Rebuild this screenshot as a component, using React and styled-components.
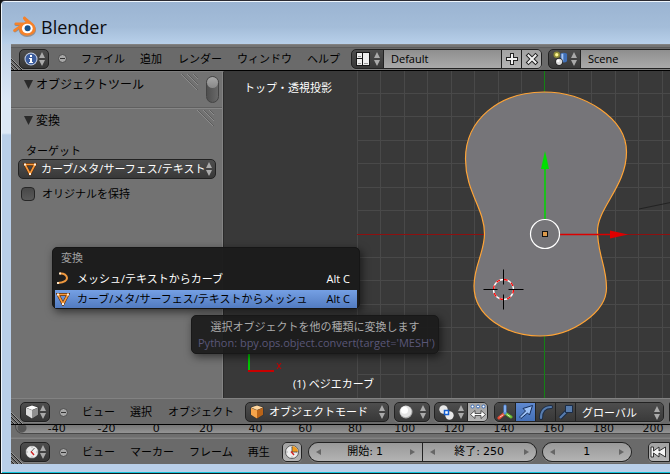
import React from 'react';
import styled, { createGlobalStyle } from 'styled-components';

const GlobalStyle = createGlobalStyle`
  * { box-sizing: border-box; }
  body { margin: 0; background: #111; }
  body, button, input, select {
    font-family: "Open Sans", "Noto Sans CJK JP", sans-serif;
    font-size: 11px;
    line-height: 16px;
  }
  button, input, select { color: inherit; margin: 0; padding: 0; border: 0; background: none; }
  svg { display: block; flex: none; }
`;

const Window = styled.div`
  position: relative;
  display: flex;
  flex-direction: column;
  min-height: 100vh;
  overflow: hidden;
  border-top: 1px solid #2b2a31;
  border-left: 1px solid #111;
  border-bottom: 1px solid #181818;
  background: linear-gradient(#a4bdd9, #dce8f6 100px, #dce8f6 132px, #b9cfe9 134px);
  box-shadow: inset 1px 1px 0 #eef5fc, inset 0 -1px 0 #12c4dc;
  padding: 1px 0 9px 10px;
  border-top-left-radius: 5px;
`;

const TitleBar = styled.header`
  display: flex;
  align-items: center;
  gap: 4px;
  height: 42px;
  margin-left: -9px;
  padding: 8px 0 0 11px;
  background: linear-gradient(#9bb4d2, #a4bdd9 60%, #b8d0ea);
`;

const Title = styled.h1`
  margin: 0;
  font: 400 18px/24px "Open Sans", sans-serif;
  color: #0c0c10;
`;

const Frame = styled.main`
  display: flex;
  flex-direction: column;
  flex: 1;
  min-width: 0;
  background: #727272;
`;

const Toolbar = styled.nav`
  position: relative;
  display: flex;
  align-items: center;
  height: 26px;
  flex: none;
  padding-left: ${p => p.$indent || 9}px;
  padding-top: 1px;
  overflow: hidden;
  white-space: nowrap;
  background: #6a6a6a;
  border-top: 1px solid #828282;
  color: #000;
`;

const InfoBar = styled(Toolbar)`
  height: 27px;
  padding-top: 2px;
  border-bottom: 1px solid #000;
  box-shadow: inset 0 2px 0 #747474, inset 0 3px 0 #5c5c5c;
`;

const Corner = styled.svg`
  position: absolute;
  left: 0;
  bottom: 0;
`;

const EditorButton = styled.button`
  display: flex;
  align-items: center;
  justify-content: space-between;
  flex: none;
  width: 30px;
  height: 20px;
  padding: 0 3px 0 4px;
  border: 1px solid #222;
  border-radius: 5px;
  background: linear-gradient(#4e4e4e, #363636);
  box-shadow: 0 1px 0 #808080;
`;

const Collapse = styled.button`
  width: 9px;
  height: 9px;
  flex: none;
  margin: 0 14px 0 9px;
  border: 1px solid #4c4c4c;
  border-radius: 50%;
  background: linear-gradient(#333, #333) center / 5px 1px no-repeat, #a8a8a8;
`;

const Menus = styled.div`
  display: flex;
  gap: 15px;
  margin-right: ${p => p.$after}px;
`;

const MenuButton = styled.button`
  min-width: 23px;
  text-align: left;
`;

const Group = styled.div`
  display: flex;
  flex: ${p => (p.$grow ? '1 0 auto' : 'none')};
  width: ${p => (p.$w ? `${p.$w}px` : 'auto')};
  height: 20px;
  margin-right: ${p => p.$after || 0}px;
  overflow: hidden;
  border: 1px solid #222;
  border-radius: ${p => p.$radius || '5px'};
  background: linear-gradient(#4e4e4e, #383838);
  box-shadow: 0 1px 0 #808080;
`;

const DropCell = styled.button`
  display: flex;
  align-items: center;
  justify-content: space-between;
  width: ${p => p.$w}px;
  padding: 0 3px 0 4px;
`;

const NameInput = styled.input`
  flex: 1;
  width: 100px;
  min-width: 0;
  padding-left: 7px;
  border-left: 1px solid #222;
  background: linear-gradient(#8f8f8f, #aaaaaa);
  outline: 0;
`;

const ToggleCell = styled.button`
  display: grid;
  place-items: center;
  width: 20px;
  border-left: ${p => (p.$first ? 0 : '1px solid #222')};
  background: ${p =>
    p.$tone === 'blue' ? 'linear-gradient(#5f88cf, #4470b8)'
      : p.$tone === 'light' ? 'linear-gradient(#a2a2a2, #b4b4b4)'
        : 'linear-gradient(#4a4a4a, #383838)'};
`;

const SelectBox = styled.label`
  display: flex;
  align-items: center;
  width: ${p => (p.$w ? `${p.$w}px` : 'auto')};
  flex: none;
  height: 20px;
  margin-right: ${p => p.$after || 0}px;
  padding: 0 3px 0 4px;
  border: ${p => (p.$flat ? '0' : '1px solid #222')};
  border-left: 1px solid #222;
  border-radius: ${p => (p.$flat ? '0' : '5px')};
  background: linear-gradient(#4e4e4e, #383838);
  color: #fff;
  select {
    flex: 1;
    min-width: 0;
    margin-left: ${p => p.$pad || 5}px;
    appearance: none;
    overflow: hidden;
    outline: 0;
  }
`;

const Work = styled.div`
  display: flex;
  flex: 1;
  min-height: 326px;
`;

const ToolShelf = styled.aside`
  position: relative;
  width: 213px;
  flex: none;
  background: #727272;
  border-top: 1px solid #7e7e7e;
  border-right: 1px solid #2b2b2b;
  box-shadow: inset -1px 0 0 #848484;
`;

const PanelHead = styled.button`
  display: flex;
  align-items: center;
  gap: 3px;
  width: 211px;
  height: ${p => p.$h}px;
  padding: 0 0 ${p => p.$bottom || 0}px 13px;
  font-size: 12px;
  color: #000;
  border-top: ${p => (p.$line ? '1px solid #868686' : 0)};
  box-shadow: ${p => (p.$line ? '0 -1px 0 #606060' : 'none')};
`;

const PanelBody = styled.div`
  display: flex;
  flex-direction: column;
  padding: 8px 7px 0;
`;

const FieldLabel = styled.label`
  padding-left: 8px;
  line-height: 17px;
  color: #000;
`;

const CheckRow = styled.label`
  display: flex;
  align-items: center;
  gap: 7px;
  margin: 7px 3px;
  color: #000;
  input {
    appearance: none;
    width: 14px;
    height: 14px;
    border: 1px solid #262626;
    border-radius: 4px;
    background: linear-gradient(#484848, #5a5a5a);
  }
`;

const Scroll = styled.div`
  position: absolute;
  top: 4px;
  right: 4px;
  width: 13px;
  height: 27px;
  border: 1px solid #444;
  border-radius: 7px;
  background: linear-gradient(90deg, #4f4f4f, #686868);
  &::before {
    content: "";
    display: block;
    width: 11px;
    height: 11px;
    border-radius: 50%;
    background: linear-gradient(#a8a8a8, #888);
  }
`;

const Grip = styled.svg`
  position: absolute;
  top: ${p => p.$top}px;
  right: ${p => p.$right}px;
`;

const Viewport = styled.section`
  position: relative;
  flex: 1;
  min-width: 0;
  overflow: hidden;
  background: #393939;
  color: #fff;
`;

const Scene = styled.svg`
  position: absolute;
  inset: 0;
  width: 100%;
  height: 100%;
`;

const ViewLabel = styled.span`
  position: absolute;
  left: ${p => p.$left}px;
  ${p => (p.$bottom ? 'bottom: 6px;' : 'top: 9px;')}
`;

const Ruler = styled.div`
  height: 14px;
  flex: none;
  border-top: 1px solid #000;
  border-bottom: 1px solid #777;
  background: #6e6e6e;
`;

const RulerTrack = styled.div`
  display: flex;
  height: 9px;
  margin-left: 4px;
  margin-right: -9px;
  padding-left: 16px;
  border: 1px solid #484848;
  border-top: 0;
  border-bottom-left-radius: 8px;
  background: radial-gradient(circle at 6px 3px, #555 4px, transparent 5px), linear-gradient(#777, #949494);
`;

const Tick = styled.span`
  flex: 1 1 0;
  text-align: center;
  font: 11px/7px "DejaVu Sans", sans-serif;
  color: #0a0a0a;
`;

const NumberBox = styled.div`
  display: flex;
  align-items: center;
  flex: 1;
  padding: 0 7px;
  border-left: ${p => (p.$line ? '1px solid #222' : 0)};
  background: linear-gradient(#999, #b3b3b3);
  font-family: "DejaVu Sans", "Noto Sans CJK JP", sans-serif;
  label { flex: 1; display: flex; justify-content: center; gap: 3px; }
  input { width: ${p => p.$digits * 7}px; font-family: inherit; outline: 0; }
`;

const PopMenu = styled.div`
  position: absolute;
  left: 51px;
  top: 246px;
  display: flex;
  flex-direction: column;
  gap: 2px;
  width: 308px;
  padding: 2px 2px 0;
  border: 1px solid #161616;
  border-radius: 5px;
  background: rgba(28, 28, 28, 0.98);
  box-shadow: 2px 3px 8px rgba(0, 0, 0, 0.55);
  color: #fff;
`;

const PopTitle = styled.div`
  height: 18px;
  padding: 0 6px;
  color: #a0a0a0;
`;

const PopItem = styled.button`
  display: flex;
  align-items: center;
  height: 18px;
  padding: 0 7px 0 1px;
  color: ${p => (p.$active ? '#000' : '#fff')};
  background: ${p => (p.$active ? 'linear-gradient(#75a0e4, #527bc0)' : 'none')};
  span { flex: 1; margin-left: 7px; text-align: left; }
  kbd { font: inherit; }
`;

const Tip = styled.div`
  position: absolute;
  left: 190px;
  top: 314px;
  width: 248px;
  padding: 3px 6px 2px;
  border: 1px solid #181818;
  border-radius: 5px;
  background: rgba(27, 27, 27, 0.93);
  box-shadow: 2px 3px 8px rgba(0, 0, 0, 0.55);
  color: #aaa;
  text-align: center;
  white-space: nowrap;
  code { display: block; font: 11px/16px "Open Sans", sans-serif; color: #5a5778; text-align: left; }
`;

const Arrows = () => (
  <svg width="6" height="14" viewBox="0 0 6 14" fill="#aaa" aria-hidden="true">
    <path d="M3 0 6 6H0zM3 14 0 8h6z" />
  </svg>
);

const Lines = () => (
  <Corner width="12" height="12" viewBox="0 0 12 12" fill="none" aria-hidden="true">
    <path d="M0 1 11 12M0 5 7 12M0 9 3 12" stroke="#222" />
    <path d="M0 0 12 12M0 4 8 12M0 8 4 12" stroke="#a0a0a0" strokeWidth=".8" />
  </Corner>
);

const PanelGrip = ({ top, right }) => (
  <Grip $top={top} $right={right} width="17" height="17" viewBox="0 0 17 17" fill="none" strokeWidth=".7" aria-hidden="true">
    <path d="M0 0 16 16M6 0 17 11M12 0l5 5" stroke="#999" />
    <path d="M1 0 17 16M7 0 17 10M13 0l4 4" stroke="#555" />
  </Grip>
);

const Triangle = () => (
  <svg width="9" height="11" viewBox="0 0 9 11"><path d="M0 0h9L4.500 9z" fill="#2a2a2a" /></svg>
);

const BlenderLogo = () => (
  <svg width="24" height="22" viewBox="0 0 24 22" aria-hidden="true">
    <path d="M11 1.500c1-1 2 0 3 1l6 5c2 2 3 4 3 6 0 4-4 7-9 7-4 0-8-3-8-7l-3 2c-1 1-3 0-2-2l6-4H3c-2 0-2-3 0-3h8l2-1-2-2z" fill="#7a5a40" opacity=".5" transform="translate(0 .5)" />
    <path d="M10.500 1c1-1 2 0 3 1l6 5c2 1.500 3 3.500 3 6 0 4-4 6.500-8.500 6.500S6 17 6 12.500l-3.500 3c-1.500 1-3-.5-2-2L7 9H3c-2 0-2-2.500 0-2.500h8l2-.5-2.500-2.500c-1-1-.5-2 0-2.500z" fill="#f5822a" />
    <ellipse cx="14.300" cy="12.500" rx="5.400" ry="4.800" fill="#fff" />
    <circle cx="14.600" cy="12.300" r="3" fill="#15528c" />
  </svg>
);

const InfoIcon = () => (
  <svg width="14" height="14" viewBox="0 0 14 14">
    <circle cx="7" cy="7" r="6.500" fill="#c8d2e6" /><circle cx="7" cy="7" r="5.500" fill="#3b5c9c" />
    <path d="M5 6h3v4h1v1H5v-1h1V7H5zM6 3h2v2H6z" fill="#fff" />
  </svg>
);

const LayoutIcon = () => (
  <svg width="14" height="14" viewBox="0 0 14 14">
    <path d="M0 0h14v14H0z" fill="#181818" />
    <path d="M1 1h5v5H1zM1 7h5v6H1zM7 1h6v12H7z" fill="#eee" /><path d="M2 11h3v1H2zM8 11h4v1H8zM2 4h3v1H2z" fill="#999" />
  </svg>
);

const SceneIcon = () => (
  <svg width="15" height="15" viewBox="0 0 16 16">
    <circle cx="4" cy="4" r="3.500" fill="#8d8b38" /><circle cx="4" cy="4" r="1.800" fill="#fff68e" />
    <path d="M8 3q3-2.500 7 0v8q-3 2.500-7 0z" fill="#3f6fb7" /><path d="M9 3h2v8H9z" fill="#a8c7f2" />
    <circle cx="6.500" cy="11.500" r="4" fill="#222" /><circle cx="6.500" cy="11.500" r="3.300" fill="#ddd" /><circle cx="5.500" cy="10.500" r="1.500" fill="#fff" />
  </svg>
);

const SymbolIcon = ({ d }) => (
  <svg width="14" height="14" viewBox="0 0 14 14" fill="none" strokeLinecap="square">
    <path d={d} stroke="#222" strokeWidth="4" />
    <path d={d} stroke="#f2f2f2" strokeWidth="2" />
  </svg>
);

const MeshIcon = () => (
  <svg width="14" height="14" viewBox="0 0 14 14">
    <path d="M2 2.500h10L7 12z" fill="none" stroke="#5b2b08" strokeWidth="2.800" />
    <path d="M2 2.500h10L7 12z" fill="none" stroke="#f89a3c" strokeWidth="1.700" />
    <path d="M1 1.500h2v2H1zM11 1.500h2v2h-2zM6 11h2v2H6z" fill="#fff1df" />
  </svg>
);

const CurveIcon = () => (
  <svg width="14" height="14" viewBox="0 0 14 14">
    <path d="M4 1.500c4-.5 7 2 7 4.500S7 10.500 2 11" fill="none" stroke="#ef983f" strokeWidth="2" />
    <path d="M3 .5h2v2H3zM1 10h2v2H1z" fill="#ffe4c2" />
  </svg>
);

const CubeIcon = ({ top = '#fff', left = '#ddd', right = '#8f8f8f' }) => (
  <svg width="14" height="14" viewBox="0 0 14 14">
    <path d="M7 0 13.500 2v8L7 14 .5 10V2z" fill="#333" />
    <path d="M7 .5 13 2.500 7 5 1 2.500z" fill={top} />
    <path d="M1 2.800 7 5.300v8.200L1 9.800z" fill={left} />
    <path d="M13 2.800 7 5.300v8.200l6-3.700z" fill={right} />
  </svg>
);

const ClockIcon = ({ wedge }) => (
  <svg width="14" height="14" viewBox="0 0 14 14" fill="none">
    <circle cx="7" cy="7" r="6.500" fill="#eee" stroke="#444" strokeWidth=".8" />
    {wedge && <path d="M7 7V1a6 6 0 0 1 6 6z" fill="#f09a1b" />}
    <path d="M7 1.500v1M7 11.500v1M1.500 7h1M11.500 7h1" stroke="#777" />
    <path d={wedge ? 'M7 7V2M7 7h5' : 'M6 7l3.500-4'} stroke="#444" strokeWidth=".8" />
    <path d="M6 6.500 9 10" stroke="#d12020" strokeWidth="1.400" />
  </svg>
);

const SphereIcon = () => (
  <svg width="14" height="14" viewBox="0 0 14 14">
    <circle cx="7" cy="7" r="6.500" fill="#aaa" /><circle cx="6.700" cy="6.500" r="5.800" fill="#e4e4e4" /><circle cx="5.500" cy="5.200" r="3.500" fill="#fff" />
  </svg>
);

const PivotIcon = () => (
  <svg width="15" height="15" viewBox="0 0 15 15">
    <circle cx="4.500" cy="4.500" r="4.200" fill="#e8e8e8" /><circle cx="10.500" cy="10.500" r="4.200" fill="#e8e8e8" />
    <path d="M5.500 5.500h4v4h-4z" fill="#fff" stroke="#155fd0" strokeWidth="1.500" />
  </svg>
);

const CentersIcon = () => (
  <svg width="16" height="16" viewBox="0 0 16 16" fill="none">
    <g fill="#fff" stroke="#3569b8"><circle cx="2.500" cy="2.500" r="1.500" /><circle cx="8" cy="2.500" r="1.500" /><circle cx="13.500" cy="2.500" r="1.500" /></g>
    <path d="M.5 10.500 5 6.500v3h6v-3l4.500 4L11 14.500v-3H5v3z" fill="#fff" stroke="#333" strokeWidth=".8" />
  </svg>
);

const AxesIcon = () => (
  <svg width="16" height="16" viewBox="0 0 16 16" strokeWidth="3" strokeLinecap="round">
    <path d="M8 9 2 14" stroke="#e24b34" /><path d="m8 9 6 4" stroke="#65b832" /><path d="M8 2v7" stroke="#4c86df" />
    <path d="M8 2v6" stroke="#b9d5ff" strokeWidth="1" /><path d="M3 13 6 11" stroke="#ffd0c4" strokeWidth="1" /><path d="m10 10.500 3 2" stroke="#d4f5b4" strokeWidth="1" />
  </svg>
);

const ArrowIcon = () => (
  <svg width="16" height="16" viewBox="0 0 16 16">
    <path d="M1.500 13 7.500 7 5 4.500 14.500 1.500 11.500 11 9.500 9 3 14.500z" fill="#9cc0f5" stroke="#142c59" strokeLinejoin="round" />
  </svg>
);

const ArcIcon = () => (
  <svg width="16" height="16" viewBox="0 0 16 16" fill="none" strokeLinecap="round">
    <path d="M3 14C3 7 7 3 13 3" stroke="#1b2c46" strokeWidth="4" />
    <path d="M3 14C3 7 7 3 13 3" stroke="#577cad" strokeWidth="2.200" />
  </svg>
);

const ScaleIcon = () => (
  <svg width="16" height="16" viewBox="0 0 16 16" fill="none">
    <path d="m2 14 7-7" stroke="#1b2c46" strokeWidth="4" /><path d="m2 14 7-7" stroke="#577cad" strokeWidth="2.200" />
    <path d="M7.500 1.500h7v7h-7z" fill="#577cad" stroke="#1b2c46" />
  </svg>
);

const RewindIcon = () => (
  <svg width="17" height="12" viewBox="0 0 17 12">
    <path d="M1 1h2.500v4L9 1v4l6.500-4v10L9 7v4L3.500 7v4H1z" fill="#f5f5f5" stroke="#222" strokeWidth=".9" />
  </svg>
);

const GRID_STEP = 23.45;
const COLS = Array.from({ length: 60 }, (_, i) => Math.ceil((i - 8) * GRID_STEP)).filter(x => x >= -187);
const ROWS = Array.from({ length: 60 }, (_, i) => Math.floor((i - 30) * GRID_STEP));

const SceneDrawing = () => (
  <Scene aria-hidden="true">
    <g transform="translate(320 163)">
      <g fill="#494949">
        {COLS.map(x => <rect key={x} x={x} y="-1000" width="1" height="2000" />)}
        {ROWS.map(y => <rect key={y} x="-187" y={y} width="1500" height="1" />)}
      </g>
      <path d="M95-25 129-32" stroke="#222" />
      <rect x="-187" y="0" width="1500" height="1" fill="#8d1010" />
      <rect x="0" y="-1000" width="1" height="2000" fill="#148214" />
      <path
        d="M0-142C-45-142-78.500-114-78.500-75-78.500-42-59.500-26-59.500 0-59.500 18-70 32-70 52-70 82-38 102-4 102 28 102 62.500 78 62.500 54 62.500 32 53.500 20 53.500-3 53.500-26 82.500-48 82.500-82 82.500-116 40-142 0-142Z"
        fill="#767579" stroke="#ffa436" strokeWidth="1.200" />
      <path d="M1-14V-66" stroke="#00d800" strokeWidth="1.500" /><path d="M1-83 5-65H-3z" fill="#00e000" />
      <path d="M15 .5H67" stroke="#dc0000" strokeWidth="1.500" /><path d="m84 .5-18-4v8z" fill="#e00000" />
      <circle cx="1" cy="0" r="14.500" fill="none" stroke="#fff" strokeWidth="1.200" />
      <rect x="-1.500" y="-2.500" width="5" height="5" fill="#dc9a4c" stroke="#111" />
      <g transform="translate(-40.500 55.500)" fill="none">
        <circle r="10" stroke="#fff" strokeWidth="1.300" />
        <circle r="10" stroke="#f00" strokeWidth="1.300" strokeDasharray="4 3.850" />
        <path d="M-20 0H-6M5 0h15M0-20V-5M0 5v15" stroke="#000" />
      </g>
      <path d="M-295 112V138" stroke="#00c800" strokeWidth="2" />
      <path d="M-296 137h26" stroke="#c80000" strokeWidth="2" />
      <path d="m-267 129 4 6m0-6-4 6" stroke="#c80000" />
      <path d="m-294 105 3 3 3-3M-291 108v4" stroke="#00a000" fill="none" />
    </g>
  </Scene>
);

const NumberField = ({ id, label, value, digits, line }) => (
  <NumberBox $digits={digits} $line={line}>
    <svg width="5" height="6" viewBox="0 0 5 6"><path d="M5 0v6L0 3z" fill="#666" /></svg>
    <label htmlFor={id}>{label}<input id={id} aria-label={label || 'フレーム'} defaultValue={value} /></label>
    <svg width="5" height="6" viewBox="0 0 5 6"><path d="M0 0v6l5-3z" fill="#666" /></svg>
  </NumberBox>
);

const MenuRow = ({ items, after }) => (
  <Menus $after={after}>{items.map(t => <MenuButton key={t}>{t}</MenuButton>)}</Menus>
);

const TICKS = [-40, -20, 0, 20, 40, 60, 80, 100, 120, 140, 160, 180, 200];

export default function App() {
  return (
    <>
      <GlobalStyle />
      <Window>
        <TitleBar><BlenderLogo /><Title>Blender</Title></TitleBar>
        <Frame>
          <InfoBar $indent={8}>
            <Lines />
            <EditorButton aria-label="Info"><InfoIcon /><Arrows /></EditorButton>
            <Collapse aria-label="Collapse" />
            <MenuRow items={['ファイル', '追加', 'レンダー', 'ウィンドウ', 'ヘルプ']} after={11} />
            <Group $w={191} $after={6}>
              <DropCell $w={31} aria-label="Screen layout"><LayoutIcon /><Arrows /></DropCell>
              <NameInput aria-label="Layout name" defaultValue="Default" />
              <ToggleCell $tone="light" aria-label="Add"><SymbolIcon d="M7 3v8M3 7h8" /></ToggleCell>
              <ToggleCell $tone="light" aria-label="Remove"><SymbolIcon d="m3.500 3.500 7 7M10.500 3.500l-7 7" /></ToggleCell>
            </Group>
            <Group $grow $radius="5px 0 0 5px">
              <DropCell $w={31} aria-label="Scene list"><SceneIcon /><Arrows /></DropCell>
              <NameInput aria-label="Scene name" defaultValue="Scene" />
            </Group>
          </InfoBar>

          <Work>
            <ToolShelf>
              <PanelHead $h={36} $bottom={10}><Triangle />オブジェクトツール</PanelHead>
              <PanelHead $h={26} $bottom={1} $line><Triangle />変換</PanelHead>
              <PanelGrip top={2} right={25} />
              <PanelGrip top={38} right={9} />
              <Scroll />
              <PanelBody>
                <FieldLabel htmlFor="target">ターゲット</FieldLabel>
                <SelectBox $pad={4}>
                  <MeshIcon />
                  <select id="target"><option>カーブ/メタ/サーフェス/テキスト</option></select>
                  <Arrows />
                </SelectBox>
                <CheckRow><input type="checkbox" />オリジナルを保持</CheckRow>
              </PanelBody>
            </ToolShelf>
            <Viewport>
              <SceneDrawing />
              <ViewLabel $left={20}>トップ・透視投影</ViewLabel>
              <ViewLabel $left={69} $bottom>(1) ベジエカーブ</ViewLabel>
            </Viewport>
          </Work>

          <Toolbar>
            <Lines />
            <EditorButton aria-label="3D View"><CubeIcon /><Arrows /></EditorButton>
            <Collapse aria-label="Collapse" />
            <MenuRow items={['ビュー', '選択', 'オブジェクト']} after={11} />
            <SelectBox $w={144} $after={5}>
              <CubeIcon top="#ffd7a0" left="#f6a44a" right="#ba6418" />
              <select aria-label="Mode"><option>オブジェクトモード</option></select>
              <Arrows />
            </SelectBox>
            <Group $w={36} $after={4}><DropCell $w={34} aria-label="Shading"><SphereIcon /><Arrows /></DropCell></Group>
            <Group $w={54} $after={6}>
              <DropCell $w={33} aria-label="Pivot"><PivotIcon /><Arrows /></DropCell>
              <ToggleCell $tone="light" aria-label="Manipulate centers"><CentersIcon /></ToggleCell>
            </Group>
            <Group $w={170} $after={5}>
              <ToggleCell $first aria-label="Manipulator"><AxesIcon /></ToggleCell>
              <ToggleCell $tone="blue" aria-label="Translate"><ArrowIcon /></ToggleCell>
              <ToggleCell aria-label="Rotate"><ArcIcon /></ToggleCell>
              <ToggleCell aria-label="Scale"><ScaleIcon /></ToggleCell>
              <SelectBox $flat $w={88} $pad={2}>
                <select aria-label="Orientation"><option>グローバル</option></select>
                <Arrows />
              </SelectBox>
            </Group>
            <Group $grow $radius="5px 0 0 5px" />
          </Toolbar>

          <Ruler><RulerTrack>{TICKS.map(t => <Tick key={t}>{t}</Tick>)}</RulerTrack></Ruler>

          <Toolbar>
            <Lines />
            <EditorButton aria-label="Timeline"><ClockIcon /><Arrows /></EditorButton>
            <Collapse aria-label="Collapse" />
            <MenuRow items={['ビュー', 'マーカー', 'フレーム', '再生']} after={11} />
            <Group $w={20} $after={6}><ToggleCell $first $tone="light" aria-label="Preview range"><ClockIcon wedge /></ToggleCell></Group>
            <Group $w={229} $after={5} $radius="10px">
              <NumberField id="start" label="開始:" value="1" digits={1} />
              <NumberField id="end" label="終了:" value="250" digits={3} line />
            </Group>
            <Group $w={90} $after={16} $radius="10px"><NumberField id="frame" value="1" digits={1} /></Group>
            <Group $grow $radius="5px 0 0 5px"><ToggleCell $first $tone="light" aria-label="Jump to start"><RewindIcon /></ToggleCell></Group>
          </Toolbar>
        </Frame>

        <PopMenu role="menu">
          <PopTitle>変換</PopTitle>
          <PopItem role="menuitem"><CurveIcon /><span>メッシュ/テキストからカーブ</span><kbd>Alt C</kbd></PopItem>
          <PopItem role="menuitem" $active><MeshIcon /><span>カーブ/メタ/サーフェス/テキストからメッシュ</span><kbd>Alt C</kbd></PopItem>
        </PopMenu>
        <Tip role="tooltip">選択オブジェクトを他の種類に変換します<code>Python: bpy.ops.object.convert(target='MESH')</code></Tip>
      </Window>
    </>
  );
}
